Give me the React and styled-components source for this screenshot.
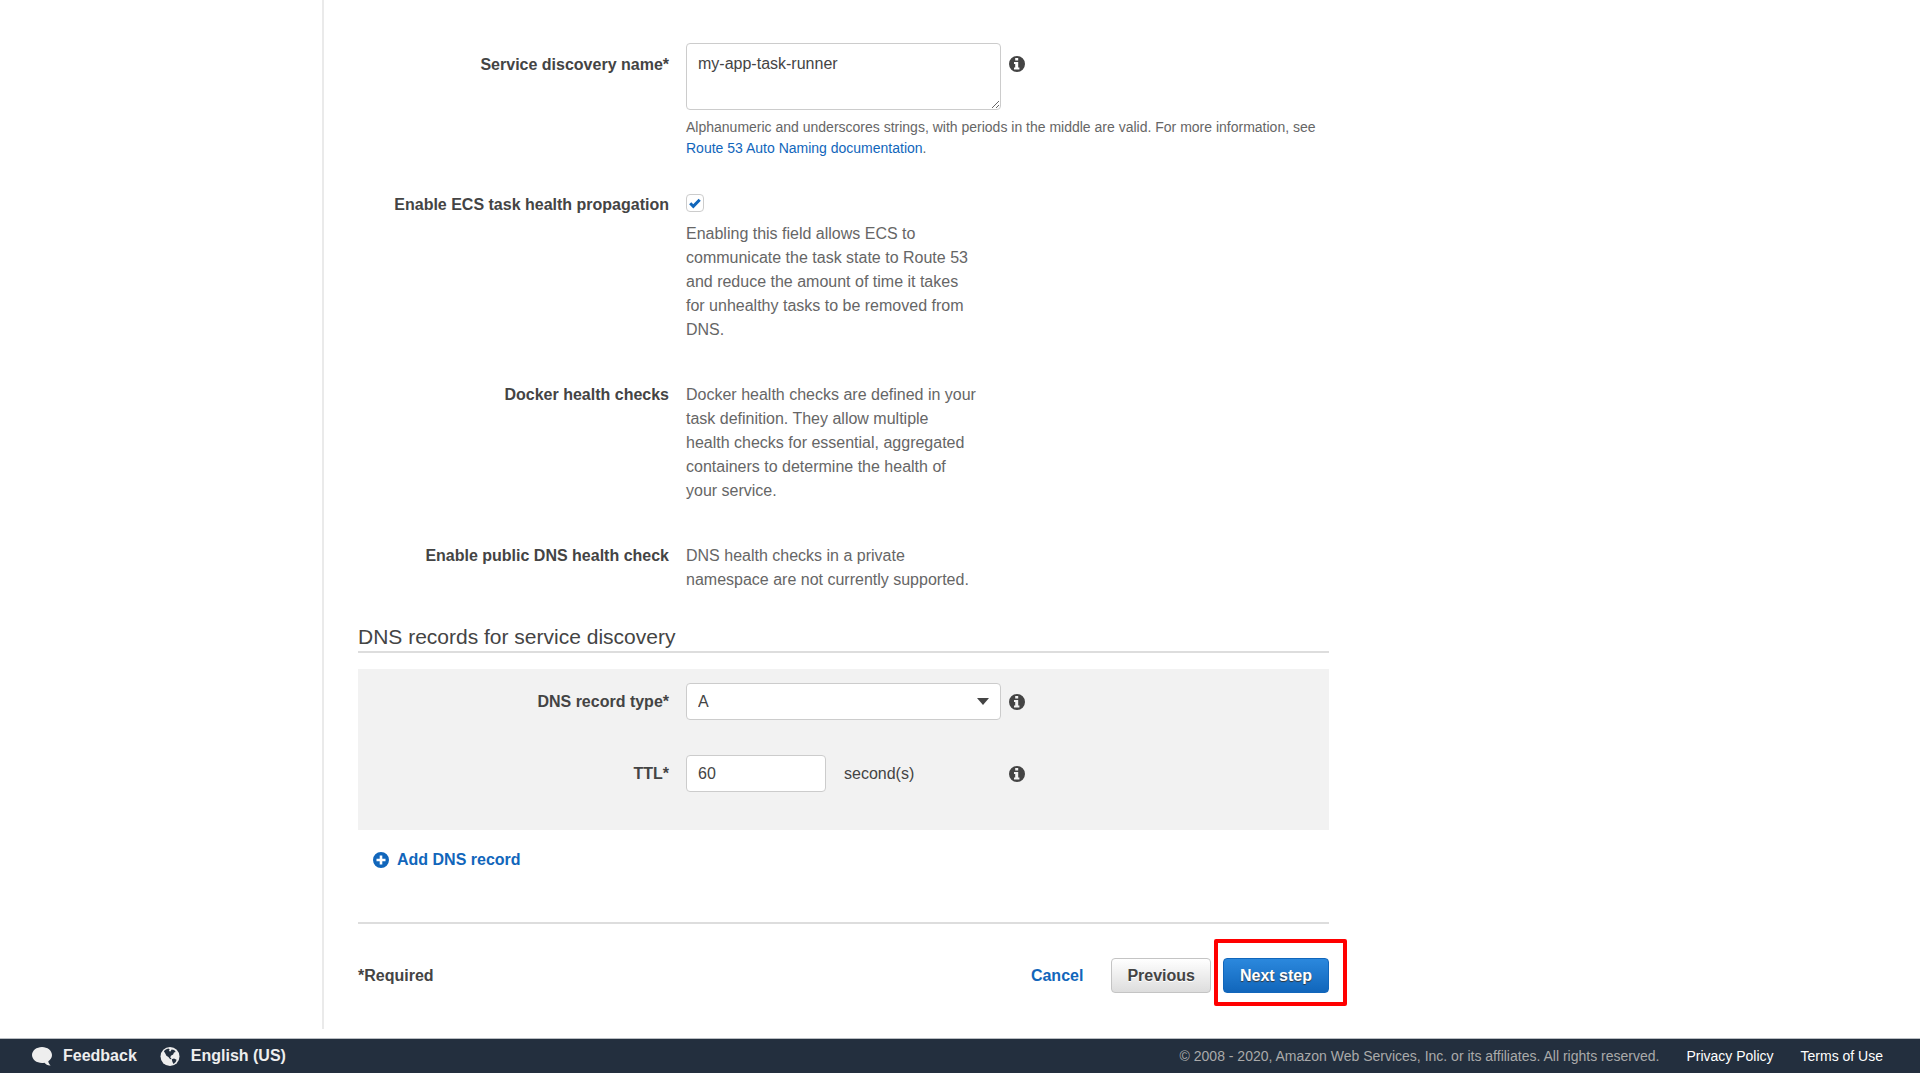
import { useState } from "react";
import styled, { createGlobalStyle } from "styled-components";

export default function App() {
  const [name, setName] = useState("my-app-task-runner");
  const [propagate, setPropagate] = useState(true);
  const [recordType, setRecordType] = useState("A");
  const [ttl, setTtl] = useState("60");

  return (
    <Page>
      <GlobalStyle />
      <Body>
        <Sidebar />
        <Form onSubmit={(e) => e.preventDefault()}>
          <Row $space={24}>
            <Label htmlFor="name">Service discovery name*</Label>
            <Field>
              <Controls>
                <TextArea id="name" value={name} onChange={(e) => setName(e.target.value)} />
                <Info $top />
              </Controls>
              <Hint>
                Alphanumeric and underscores strings, with periods in the middle are valid. For more
                information, see <Link href="#docs">Route 53 Auto Naming documentation</Link>.
              </Hint>
            </Field>
          </Row>
          <Row $space={31}>
            <Label htmlFor="propagate">Enable ECS task health propagation</Label>
            <Field>
              <CheckWrap>
                <Checkbox
                  id="propagate"
                  type="checkbox"
                  checked={propagate}
                  onChange={(e) => setPropagate(e.target.checked)}
                />
                {propagate && (
                  <Tick viewBox="0 0 12 12">
                    <path d="M1.200 6.300l3.100 3.100L10.700 2.700" />
                  </Tick>
                )}
              </CheckWrap>
              <Description>
                Enabling this field allows ECS to communicate the task state to Route 53 and reduce
                the amount of time it takes for unhealthy tasks to be removed from DNS.
              </Description>
            </Field>
          </Row>
          <Row $space={31}>
            <Label as="span">Docker health checks</Label>
            <Description>
              Docker health checks are defined in your task definition. They allow multiple
              <br />
              health checks for essential, aggregated containers to determine the health of your
              service.
            </Description>
          </Row>
          <Row $space={33}>
            <Label as="span">Enable public DNS health check</Label>
            <Description>
              DNS health checks in a private namespace are not currently supported.
            </Description>
          </Row>

          <Title>DNS records for service discovery</Title>
          <Records>
            <RecordRow>
              <RecordLabel htmlFor="type">DNS record type*</RecordLabel>
              <Controls>
                <SelectWrap>
                  <Select
                    id="type"
                    value={recordType}
                    onChange={(e) => setRecordType(e.target.value)}
                  >
                    <option>A</option>
                    <option>SRV</option>
                  </Select>
                  <Arrow viewBox="0 0 12 7">
                    <path d="M0 0h12L6 7z" />
                  </Arrow>
                </SelectWrap>
                <Info />
              </Controls>
            </RecordRow>
            <RecordRow>
              <RecordLabel htmlFor="ttl">TTL*</RecordLabel>
              <Controls>
                <Ttl>
                  <Input id="ttl" value={ttl} onChange={(e) => setTtl(e.target.value)} />
                  <span>second(s)</span>
                </Ttl>
                <Info />
              </Controls>
            </RecordRow>
          </Records>
          <AddButton type="button">
            <RoundIcon viewBox="0 0 16 16">
              <path
                fillRule="evenodd"
                d="M8 0a8 8 0 1 1 0 16A8 8 0 0 1 8 0zM6.700 3.500v3.200H3.500v2.600h3.200v3.200h2.600V9.300h3.200V6.700H9.300V3.500z"
              />
            </RoundIcon>
            Add DNS record
          </AddButton>

          <Actions>
            <Required>*Required</Required>
            <Cancel href="#cancel">Cancel</Cancel>
            <Button type="button">Previous</Button>
            <Highlight>
              <Button type="submit" $primary>
                Next step
              </Button>
            </Highlight>
          </Actions>
        </Form>
      </Body>
      <Footer>
        <FooterButton type="button">
          <FooterIcon viewBox="0 0 20 19">
            <path d="M10 0c5.500 0 10 3.600 10 8 0 2.700-1.500 4.800-3.700 6.300.2 1.700 1 3 2.300 4.100-2.600.2-4.700-.8-6.200-2.600-.8.200-1.600.2-2.400.2-5.500 0-10-3.600-10-8s4.500-8 10-8z" />
          </FooterIcon>
          Feedback
        </FooterButton>
        <FooterButton type="button">
          <FooterIcon viewBox="0 0 19 19">
            <circle cx="9.500" cy="9.500" r="9.500" />
            <Land d="M3.400 4.200C4.600 2.700 6 1.900 7.800 1.500l1.400 1-.8 1.400 1.500.5 1.200-1.900 2.600.6 1.500 1.900-1.700.5-.9 2-2.200 1.300-.6 1.600 1.300 1.400-1.400.4-1.800-2.300-2-1.200-1.400-2.600z" />
            <Land d="M11.200 12.200l2.300-.7 2.600 1.300-.9 2.200-2.200 1.900-1-2z" />
          </FooterIcon>
          English (US)
        </FooterButton>
        <Copyright>
          © 2008 - 2020, Amazon Web Services, Inc. or its affiliates. All rights reserved.
        </Copyright>
        <FooterLink href="#privacy">Privacy Policy</FooterLink>
        <FooterLink href="#terms">Terms of Use</FooterLink>
      </Footer>
    </Page>
  );
}

function Info({ $top }) {
  return (
    <InfoButton type="button" aria-label="More information" $top={$top}>
      <RoundIcon viewBox="0 0 16 16">
        <path
          fillRule="evenodd"
          d="M8 0a8 8 0 1 1 0 16A8 8 0 0 1 8 0zM6.200 1.900v2.600h3V1.900zM5 6v2h1.200v3.600H5v2h5.400v-2H9.200V6z"
        />
      </RoundIcon>
    </InfoButton>
  );
}

const GlobalStyle = createGlobalStyle`
  * {
    box-sizing: border-box;
  }
  body {
    margin: 0;
    background: #ffffff;
  }
  body, button, input, select, textarea {
    font-family: "Liberation Sans", Arial, sans-serif;
    font-size: 16px;
    line-height: 24px;
    color: #444444;
  }
`;

const Page = styled.div`
  min-height: 100vh;
  display: flex;
  flex-direction: column;
`;

const Body = styled.div`
  flex: 1;
  display: flex;
  margin-bottom: 9px;
`;

const Sidebar = styled.aside`
  width: 324px;
  flex-shrink: 0;
  border-right: 2px solid #eaeaea;
`;

const Form = styled.form`
  flex: 1;
  min-width: 0;
  max-width: 1005px;
  padding: 43px 0 34px 34px;
`;

const Row = styled.div`
  display: grid;
  grid-template-columns: 311px 1fr;
  column-gap: 17px;
  margin-bottom: ${(props) => props.$space}px;
`;

const RecordRow = styled.div`
  display: grid;
  grid-template-columns: 311px 1fr;
  column-gap: 17px;
  align-items: center;
`;

const RecordLabel = styled.label`
  padding-top: 1px;
  font-weight: bold;
  text-align: right;
`;

const Label = styled(RecordLabel)`
  padding-top: 10px;
`;

const Field = styled.div`
  display: flex;
  flex-direction: column;
`;

const Controls = styled.div`
  display: flex;
  align-items: center;
  gap: 8px;
`;

const TextArea = styled.textarea`
  width: 315px;
  height: 67px;
  padding: 8px 11px;
  border: 1px solid #cccccc;
  border-radius: 4px;
  background: #ffffff;
`;

const InfoButton = styled.button`
  display: flex;
  align-self: ${(props) => (props.$top ? "flex-start" : "center")};
  padding: 0;
  margin-top: ${(props) => (props.$top ? "13px" : "0")};
  border: none;
  background: none;
`;

const RoundIcon = styled.svg`
  width: 16px;
  height: 16px;
  fill: currentColor;
`;

const Hint = styled.p`
  margin: 7px 0 0;
  font-size: 14px;
  line-height: 21px;
  color: #666666;
`;

const Link = styled.a`
  color: #1166bb;
  text-decoration: none;
`;

const CheckWrap = styled.div`
  position: relative;
  display: flex;
  width: 18px;
  margin-top: 11px;
`;

const Checkbox = styled.input`
  appearance: none;
  width: 18px;
  height: 18px;
  margin: 0;
  border: 1px solid #cccccc;
  border-radius: 4px;
  background: #ffffff;
`;

const Tick = styled.svg`
  position: absolute;
  top: 3px;
  left: 3px;
  width: 12px;
  height: 12px;
  fill: none;
  stroke: #1166bb;
  stroke-width: 3;
  pointer-events: none;
`;

const Description = styled.p`
  width: 294px;
  margin: 0;
  padding-top: 10px;
  color: #666666;
`;

const Title = styled.h2`
  margin: 0 0 16px;
  padding-bottom: 2px;
  border-bottom: 2px solid #dddddd;
  font-size: 21px;
  font-weight: normal;
  line-height: 24px;
`;

const Records = styled.div`
  display: flex;
  flex-direction: column;
  gap: 35px;
  padding: 14px 0 38px;
  background: #f2f2f2;
`;

const SelectWrap = styled.div`
  position: relative;
  width: 315px;
`;

const Select = styled.select`
  appearance: none;
  display: block;
  width: 100%;
  height: 37px;
  padding: 0 11px;
  border: 1px solid #cccccc;
  border-radius: 4px;
  background: #ffffff;
`;

const Arrow = styled.svg`
  position: absolute;
  top: 15px;
  right: 12px;
  width: 12px;
  height: 7px;
  fill: #444444;
  pointer-events: none;
`;

const Ttl = styled.div`
  display: flex;
  align-items: center;
  gap: 18px;
  width: 315px;
`;

const Input = styled.input`
  width: 140px;
  height: 37px;
  padding: 1px 11px 0;
  border: 1px solid #cccccc;
  border-radius: 4px;
  background: #ffffff;
`;

const AddButton = styled.button`
  display: flex;
  align-items: center;
  gap: 8px;
  margin-top: 18px;
  padding: 0 15px;
  border: none;
  background: none;
  font-weight: bold;
  color: #1166bb;
`;

const Actions = styled.div`
  display: flex;
  align-items: center;
  margin-top: 50px;
  padding-top: 34px;
  border-top: 2px solid #dddddd;
`;

const Required = styled.span`
  flex: 1;
  font-weight: bold;
`;

const Cancel = styled(Link)`
  margin-right: 28px;
  font-weight: bold;
`;

const Button = styled.button`
  height: 35px;
  padding: 0 ${(props) => (props.$primary ? "16px" : "15px")};
  border: 1px solid ${(props) => (props.$primary ? "#1166bb" : "#c4c4c4")};
  border-radius: 4px;
  background: ${(props) =>
    props.$primary
      ? "linear-gradient(#2b88dd, #1166bb)"
      : "linear-gradient(#ffffff, #dddddd)"};
  font-weight: bold;
  white-space: nowrap;
  color: ${(props) => (props.$primary ? "#ffffff" : "#444444")};
  text-shadow: ${(props) => (props.$primary ? "0 1px 1px #333333" : "0 1px 0 #ffffff")};
`;

const Highlight = styled.div`
  position: relative;
  display: flex;
  margin-left: 12px;

  &::after {
    content: "";
    position: absolute;
    inset: -19px -18px -13px -9px;
    border: 4px solid #ff0000;
    border-radius: 2px;
    pointer-events: none;
  }
`;

const Footer = styled.footer`
  display: flex;
  align-items: center;
  height: 35px;
  padding: 0 37px 0 32px;
  border-top: 1px solid #b9bdc2;
  background: #232f3e;
`;

const FooterButton = styled.button`
  display: flex;
  align-items: center;
  gap: 11px;
  margin-right: 23px;
  padding: 0;
  border: none;
  background: none;
  font-weight: bold;
  color: #eeeeee;
`;

const FooterIcon = styled.svg`
  width: 20px;
  height: 19px;
  fill: #eeeeee;
`;

const Land = styled.path`
  fill: #232f3e;
`;

const Copyright = styled.span`
  margin-left: auto;
  font-size: 14px;
  color: #aaaaaa;
`;

const FooterLink = styled.a`
  margin-left: 27px;
  font-size: 14px;
  color: #ffffff;
  text-decoration: none;
`;
